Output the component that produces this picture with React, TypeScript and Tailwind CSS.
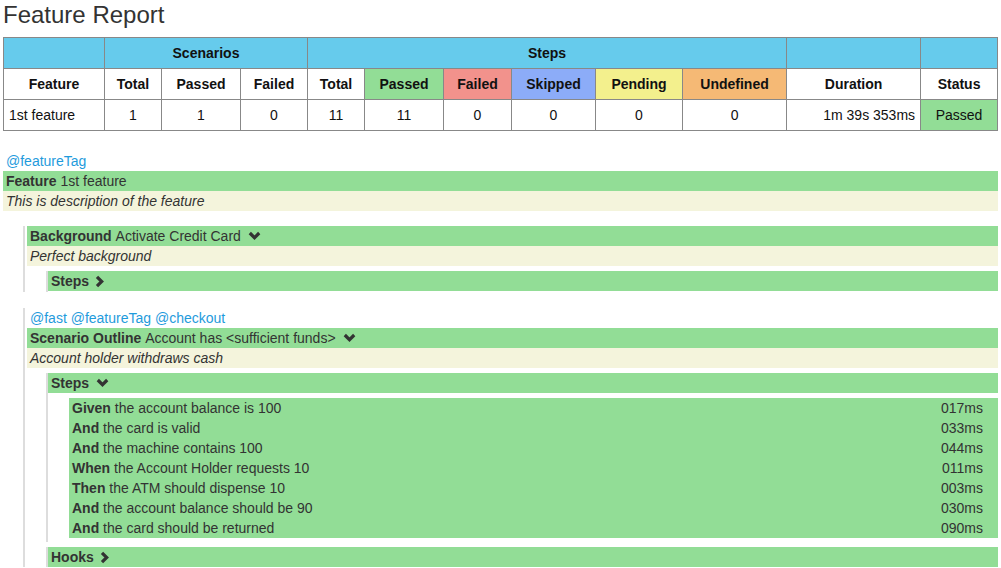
import React from 'react';

const ChevronDown = () => (
  <svg className="ml-[7px] inline-block" width="13" height="10" viewBox="0 0 13 10">
    <polyline points="1.8,2 6.5,6.7 11.2,2" fill="none" stroke="#333" strokeWidth="3.2" strokeLinejoin="miter" />
  </svg>
);

const ChevronRight = () => (
  <svg className="ml-[6px] inline-block" width="10" height="13" viewBox="0 0 10 13">
    <polyline points="2,1.8 6.7,6.5 2,11.2" fill="none" stroke="#333" strokeWidth="3.2" strokeLinejoin="miter" />
  </svg>
);

const steps = [
  { kw: 'Given', text: 'the account balance is 100', ms: '017ms' },
  { kw: 'And', text: 'the card is valid', ms: '033ms' },
  { kw: 'And', text: 'the machine contains 100', ms: '044ms' },
  { kw: 'When', text: 'the Account Holder requests 10', ms: '011ms' },
  { kw: 'Then', text: 'the ATM should dispense 10', ms: '003ms' },
  { kw: 'And', text: 'the account balance should be 90', ms: '030ms' },
  { kw: 'And', text: 'the card should be returned', ms: '090ms' },
];

const th = 'border border-[#888] font-bold text-center';
const td = 'border border-[#888] text-center';

export default function App() {
  return (
    <div className="px-[3px] pb-4 font-['Liberation_Sans',Arial,sans-serif] text-[14px] leading-[20px] text-[#333] bg-white min-h-[568px]">
      <h1 className="pt-px text-[24px] leading-[28px] font-normal text-[#333]">Feature Report</h1>

      <table className="mt-[8px] w-[995px] table-fixed border-collapse text-[#111]">
        <colgroup>
          <col className="w-[101px]" />
          <col className="w-[57px]" />
          <col className="w-[79px]" />
          <col className="w-[67px]" />
          <col className="w-[57px]" />
          <col className="w-[79px]" />
          <col className="w-[68px]" />
          <col className="w-[84px]" />
          <col className="w-[87px]" />
          <col className="w-[104px]" />
          <col className="w-[134px]" />
          <col className="w-[77px]" />
        </colgroup>
        <thead>
          <tr className="h-[31px] bg-[#66cbec]">
            <th className={th}></th>
            <th className={th} colSpan={3}>Scenarios</th>
            <th className={th} colSpan={6}>Steps</th>
            <th className={th}></th>
            <th className={th}></th>
          </tr>
          <tr className="h-[31px]">
            <th className={th}>Feature</th>
            <th className={th}>Total</th>
            <th className={th}>Passed</th>
            <th className={th}>Failed</th>
            <th className={th}>Total</th>
            <th className={`${th} bg-[#92dd96]`}>Passed</th>
            <th className={`${th} bg-[#f2928c]`}>Failed</th>
            <th className={`${th} bg-[#8cacf8]`}>Skipped</th>
            <th className={`${th} bg-[#f3f08d]`}>Pending</th>
            <th className={`${th} bg-[#f5b975]`}>Undefined</th>
            <th className={th}>Duration</th>
            <th className={th}>Status</th>
          </tr>
        </thead>
        <tbody>
          <tr className="h-[31px]">
            <td className="border border-[#888] text-left pl-[5px]">1st feature</td>
            <td className={td}>1</td>
            <td className={td}>1</td>
            <td className={td}>0</td>
            <td className={td}>11</td>
            <td className={td}>11</td>
            <td className={td}>0</td>
            <td className={td}>0</td>
            <td className={td}>0</td>
            <td className={td}>0</td>
            <td className="border border-[#888] text-right pr-[5px]">1m 39s 353ms</td>
            <td className={`${td} bg-[#92dd96]`}>Passed</td>
          </tr>
        </tbody>
      </table>

      <div className="mt-[20px]">
        <div className="h-[20px] pl-[3px] text-[#1f9bdc]">@featureTag</div>
        <div className="h-[20px] pl-[3px] bg-[#92dd96]">
          <b>Feature</b> 1st feature
        </div>
        <div className="h-[20px] pl-[3px] bg-[#f4f4dc] italic">This is description of the feature</div>

        <div className="mt-[15px] ml-[20px] border-l-2 border-[#ddd] pl-[2px]">
          <div className="h-[20px] pl-[3px] bg-[#92dd96] flex items-center">
            <b>Background</b>&nbsp;Activate Credit Card
            <ChevronDown />
          </div>
          <div className="h-[20px] pl-[3px] bg-[#f4f4dc] italic">Perfect background</div>
          <div className="mt-[5px] ml-[19px] border-l-2 border-[#ddd] pb-px">
            <div className="h-[20px] pl-[3px] bg-[#92dd96] flex items-center">
              <b>Steps</b>
              <ChevronRight />
            </div>
          </div>
        </div>

        <div className="mt-[16px] ml-[20px] border-l-2 border-[#ddd] pl-[2px]">
          <div className="h-[20px] pl-[3px] text-[#1f9bdc]">@fast @featureTag @checkout</div>
          <div className="h-[20px] pl-[3px] bg-[#92dd96] flex items-center">
            <b>Scenario Outline</b>&nbsp;Account has &lt;sufficient funds&gt;
            <ChevronDown />
          </div>
          <div className="h-[20px] pl-[3px] bg-[#f4f4dc] italic">Account holder withdraws cash</div>

          <div className="mt-[5px] ml-[19px] border-l-2 border-[#ddd] pb-[4px]">
            <div className="h-[20px] pl-[3px] bg-[#92dd96] flex items-center">
              <b>Steps</b>
              <ChevronDown />
            </div>
            <div className="mt-[5px] ml-[21px] bg-[#92dd96]">
              {steps.map((s, i) => (
                <div key={i} className="h-[20px] pl-[3px] pr-[15px] flex justify-between">
                  <span>
                    <b>{s.kw}</b> {s.text}
                  </span>
                  <span>{s.ms}</span>
                </div>
              ))}
            </div>
          </div>

          <div className="mt-[5px] ml-[19px] border-l-2 border-[#ddd]">
            <div className="h-[20px] pl-[3px] bg-[#92dd96] flex items-center">
              <b>Hooks</b>
              <ChevronRight />
            </div>
          </div>
        </div>
      </div>
    </div>
  );
}
